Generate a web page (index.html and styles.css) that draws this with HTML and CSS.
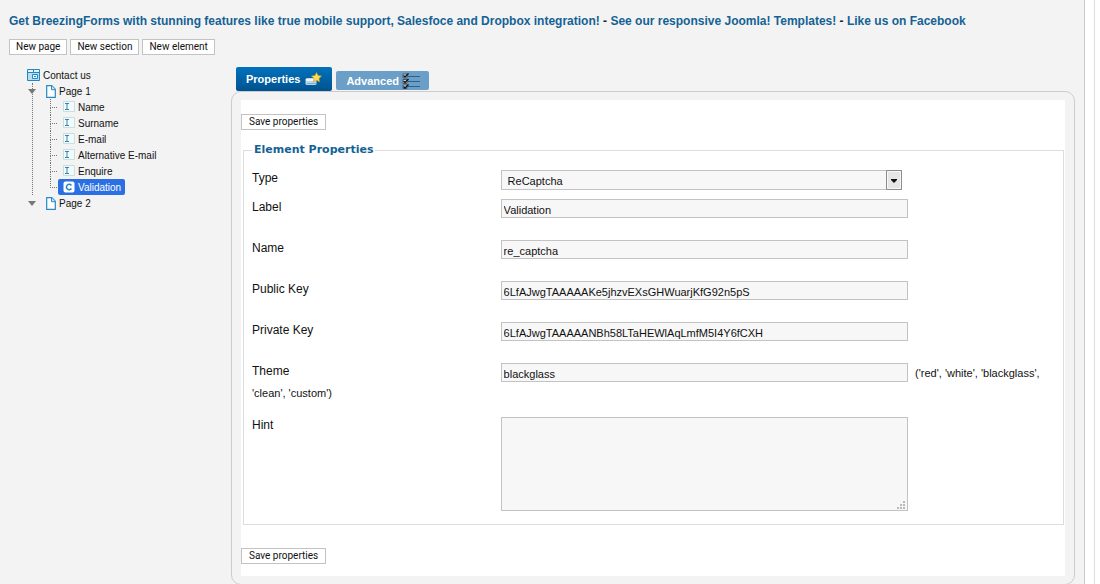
FILE: index.html
```html
<!DOCTYPE html>
<html lang="en">
<head>
<meta charset="utf-8">
<meta name="viewport" content="width=device-width, initial-scale=1">
<title>BreezingForms</title>
<link rel="stylesheet" href="styles.css">
</head>
<body>
<svg class="sprite" aria-hidden="true">
  <symbol id="form" viewBox="0 0 13 12">
    <path d="M.5.500h12v11H.5z" fill="#b9ddec" stroke="#2187c4"/>
    <path d="M1 1h11v2H1z" fill="#e9f5fa"/>
    <path d="M1 3.500h11M6.500 1v3" stroke="#2187c4" fill="none"/>
    <path d="M5.500 5.500h5v4h-5z" fill="#e9f5fa" stroke="#2187c4"/>
    <path d="M7 7.500h2" stroke="#2187c4"/>
  </symbol>
  <symbol id="page" viewBox="0 0 10 13">
    <path d="M.7.700h5l3.600 3.600v8H.7z" fill="#fff" stroke="#2489c6" stroke-width="1.200"/>
    <path d="M5.500.700v4h4" fill="#d5ecf6" stroke="#2489c6"/>
  </symbol>
  <symbol id="field" viewBox="0 0 12 12">
    <path d="M.5.500h11v10H.5z" fill="#f3fafa" stroke="#c5dfe2"/>
    <path d="M2 2.500h4M2 8.500h4M4 2.500v6" stroke="#2c86bd" fill="none"/>
  </symbol>
  <symbol id="captcha" viewBox="0 0 12 12">
    <rect x=".5" y=".5" width="11" height="11" rx="2" fill="#fff"/>
    <path d="M8.400 4.500A2.700 2.700 0 1 0 8.400 7.500" fill="none" stroke="#2a83c6" stroke-width="1.500"/>
  </symbol>
</svg>

<div class="shell">
  <main class="page">
    <p class="promo"><a href="#">Get BreezingForms with stunning features like true mobile support, Salesfoce and Dropbox integration!</a> - <a href="#">See our responsive Joomla! Templates!</a> - <a href="#">Like us on Facebook</a></p>

    <div class="toolbar">
      <button class="btn" type="button">New page</button>
      <button class="btn" type="button">New section</button>
      <button class="btn" type="button">New element</button>
    </div>

    <div class="columns">
      <nav class="tree" aria-label="Form structure">
        <a class="node" href="#"><svg class="icon-form"><use href="#form"/></svg>Contact us</a>
        <ul class="pages">
          <li class="page-item">
            <a class="node" href="#"><svg class="icon-page"><use href="#page"/></svg>Page 1</a>
            <ul class="elements">
              <li><a class="node" href="#"><svg class="icon-field"><use href="#field"/></svg>Name</a></li>
              <li><a class="node" href="#"><svg class="icon-field"><use href="#field"/></svg>Surname</a></li>
              <li><a class="node" href="#"><svg class="icon-field"><use href="#field"/></svg>E-mail</a></li>
              <li><a class="node" href="#"><svg class="icon-field"><use href="#field"/></svg>Alternative E-mail</a></li>
              <li><a class="node" href="#"><svg class="icon-field"><use href="#field"/></svg>Enquire</a></li>
              <li><a class="node selected" href="#"><svg class="icon-field"><use href="#captcha"/></svg>Validation</a></li>
            </ul>
          </li>
          <li class="page-item"><a class="node" href="#"><svg class="icon-page"><use href="#page"/></svg>Page 2</a></li>
        </ul>
      </nav>

      <div class="editor">
        <div class="tabs" role="tablist">
          <button class="tab active" type="button" role="tab" aria-selected="true">Properties
            <svg width="17" height="14" viewBox="0 0 17 14" aria-hidden="true">
              <rect x=".5" y="6" width="11" height="7" rx="1.500" fill="#b8d5e9"/>
              <path d="M1 7h10v2H1z" fill="#eef6fb"/>
              <path d="M2 11.500h9" stroke="#79add0"/>
              <path d="M11.500.500l1.500 3 3.500.500-2.500 2.400.600 3.400-3.100-1.600-3.100 1.600.600-3.400L6.500 4l3.500-.500z" fill="#ffdf4f" stroke="#c99720" stroke-width=".6"/>
            </svg>
          </button>
          <button class="tab" type="button" role="tab" aria-selected="false">Advanced
            <svg width="19" height="16" viewBox="0 0 19 16" aria-hidden="true">
              <path d="M6 3.500h12M6 8.500h12M6 13.500h12" stroke="#28628d"/>
              <path d="M1 1h4v4H1zM1 6.500h4v4H1zM1 12h4v3.500H1z" fill="#d7e3ec" stroke="#34495a" stroke-width=".8"/>
              <path d="M1.500 2.500l1.500 1.500L6.500.500M1.500 8l1.500 1.500L6.500 6M1.500 13.500L3 15l3.500-3.500" fill="none" stroke="#111" stroke-width="1.400"/>
            </svg>
          </button>
        </div>

        <div class="panel">
          <form class="sheet">
            <button class="btn save" type="button">Save properties</button>
            <fieldset class="group">
              <legend>Element Properties</legend>
              <div class="row compact">
                <label for="type">Type</label><span class="select"><select id="type"><option>ReCaptcha</option></select><svg width="16" height="20" viewBox="0 0 16 20" aria-hidden="true"><path d="M.5.500h15v19H.5z" fill="#e6e6e6" stroke="#8c8c8c"/><path d="M1.500 1.500h13v17h-13z" fill="none" stroke="#f7f7f7"/><path d="M5 9h6v1l-3 3-3-3z" fill="#111"/></svg></span>
              </div>
              <div class="row"><label for="label">Label</label><input id="label" type="text" value="Validation"></div>
              <div class="row"><label for="name">Name</label><input id="name" type="text" value="re_captcha"></div>
              <div class="row"><label for="public">Public Key</label><input id="public" type="text" value="6LfAJwgTAAAAAKe5jhzvEXsGHWuarjKfG92n5pS"></div>
              <div class="row"><label for="private">Private Key</label><input id="private" type="text" value="6LfAJwgTAAAAANBh58LTaHEWlAqLmfM5I4Y6fCXH"></div>
              <div class="row hinted"><label for="theme">Theme</label><input id="theme" type="text" value="blackglass"> <span>('red', 'white', 'blackglass',</span> <span>'clean', 'custom')</span></div>
              <div class="row last"><label for="hint">Hint</label><textarea id="hint"></textarea></div>
            </fieldset>
            <button class="btn save" type="button">Save properties</button>
          </form>
        </div>
      </div>
    </div>
  </main>
</div>
</body>
</html>
```
FILE: styles.css
```css
* { box-sizing: border-box; }

body {
  margin: 0;
  background: #fff;
  color: #222;
  font-family: "Liberation Sans", Arial, sans-serif;
  font-size: 10px;
}

.sprite { display: none; }

.shell {
  margin-right: 5px;
  padding-right: 9px;
  border-right: 1px solid #ddd;
}

.page {
  padding: 13px 9px 0 0;
  background: #f3f3f3;
  border-right: 1px solid #ccc;
}

.promo {
  margin: 0 0 10px 9px;
  font-size: 12px;
  line-height: 16px;
  font-weight: 700;
}

.promo a { color: #146295; text-decoration: none; }

.toolbar { display: flex; gap: 3px; margin-left: 9px; }

.btn {
  display: block;
  height: 16px;
  padding: 0 6px;
  border: 1px solid #c3c3c3;
  background: #fff;
  color: #111;
  font: 10px/14px Roboto, sans-serif;
}

.btn.save { padding: 0 7px; }

.columns { display: flex; margin-top: 12px; }

.tree { flex: 0 0 231px; padding-left: 27px; }

.tree ul { margin: 0; padding: 0; list-style: none; }

.node {
  display: flex;
  align-items: center;
  gap: 3px;
  width: max-content;
  height: 16px;
  color: #111;
  text-decoration: none;
}

.icon-form { width: 13px; height: 12px; }
.icon-page { width: 10px; height: 13px; }
.icon-field { width: 12px; height: 12px; }

.tree .pages { padding-left: 5px; }

.page-item { position: relative; padding-left: 14px; }

.page-item::before {
  content: "";
  position: absolute;
  left: 0;
  top: 0;
  bottom: 0;
  border-left: 1px dotted #777;
}

.page-item:last-child::before { display: none; }

.page-item::after {
  content: "";
  position: absolute;
  left: -4px;
  top: 6px;
  border: 4px solid transparent;
  border-top: 5px solid #777;
  border-bottom: 0;
}

.tree .elements { padding-left: 4px; }

.elements li { position: relative; padding-left: 8px; }

.elements li::before {
  content: "";
  position: absolute;
  left: 0;
  top: 0;
  width: 6px;
  height: 8px;
  border-left: 1px dotted #777;
  border-bottom: 1px dotted #777;
}

.elements li:not(:last-child)::after {
  content: "";
  position: absolute;
  left: 0;
  top: 8px;
  height: 8px;
  border-left: 1px dotted #777;
}

.elements .node { padding: 0 4px 0 5px; }

.node.selected {
  border-radius: 2px;
  background: #2b70e2;
  color: #fff;
}

.editor { flex: 1; min-width: 0; }

.tabs { display: flex; align-items: flex-end; gap: 4px; padding-left: 5px; }

.tab {
  display: flex;
  align-items: center;
  gap: 3px;
  height: 19px;
  margin-bottom: 1px;
  padding: 0 8px 0 10px;
  border: 0;
  border-radius: 2px;
  background: #6b9fc8;
  color: #fff;
  font: 700 11px/16px "Liberation Sans", Arial, sans-serif;
}

.tab.active {
  gap: 5px;
  height: 24px;
  margin-bottom: 0;
  padding-right: 10px;
  background: linear-gradient(#0072bd, #00528f);
}

.panel {
  padding: 8px 9px;
  border: 1px solid #ccc;
  border-radius: 10px;
}

.sheet { padding: 14px 0 12px; background: #fff; }

.group {
  min-width: 0;
  margin: 12px 1px 23px 2px;
  padding: 12px 9px 13px 8px;
  border: 1px solid #ddd;
}

.group legend {
  padding: 0 2px;
  color: #146295;
  font: 700 11px/16px "DejaVu Sans", sans-serif;
}

.row {
  margin-bottom: 21px;
  color: #111;
  font-size: 11px;
  line-height: 20px;
}

.row.compact { margin-bottom: 9px; }
.row.hinted { margin-bottom: 14px; }
.row.last { margin-bottom: 0; }

.row label {
  display: inline-block;
  width: 31%;
  font-size: 12px;
  line-height: 16px;
  vertical-align: top;
}

.row input,
.row textarea,
.row select {
  margin: 0;
  border: 1px solid #c3c3c3;
  border-radius: 0;
  background: #f7f7f7;
  color: #111;
  font: 11px/16px "Liberation Sans", Arial, sans-serif;
}

.row input,
.row textarea {
  width: 50.8%;
  padding: 2px 2px 0;
  margin-right: 4px;
  vertical-align: top;
}

.row input { height: 19px; margin-bottom: 1px; }
.row textarea { height: 94px; resize: vertical; }

/* Grip: a triangle of dots, one strip of dots per column */
.row textarea::-webkit-resizer {
  background-image:
    repeating-linear-gradient(to top, #bbb 0 2px, transparent 2px 3px),
    repeating-linear-gradient(to top, #bbb 0 2px, transparent 2px 3px),
    linear-gradient(#bbb, #bbb);
  background-repeat: no-repeat;
  background-size: 2px 8px, 2px 5px, 2px 2px;
  background-position: right 2px bottom 1px, right 5px bottom 1px, right 8px bottom 1px;
}

.select {
  display: inline-flex;
  position: relative;
  width: 50%;
  vertical-align: top;
}

.row select {
  width: 100%;
  height: 20px;
  padding: 2px 20px 0 6px;
  appearance: none;
}

.select svg {
  position: absolute;
  right: 0;
  top: 0;
  pointer-events: none;
}
```
